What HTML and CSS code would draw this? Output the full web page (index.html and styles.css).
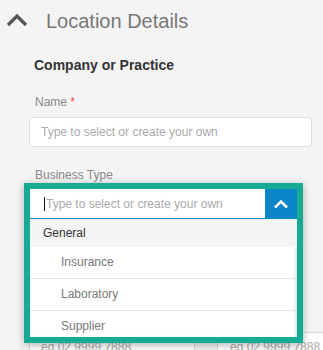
FILE: index.html
```html
<!DOCTYPE html>
<html lang="en">
<head>
    <meta charset="UTF-8">
    <meta name="viewport" content="width=device-width, initial-scale=1.0">
    <title>Location Details</title>
    <link rel="stylesheet" href="styles.css">
</head>
<body>
    <div class="section-head">
        <svg class="collapse-icon" width="22" height="14" viewBox="0 0 22 14">
            <polyline points="2,12 11,3 20,12" fill="none" stroke="#555" stroke-width="3.2"/>
        </svg>
        <h2>Location Details</h2>
    </div>

    <div class="section-body">
        <h3 class="group-title">Company or Practice</h3>

        <div class="field">
            <label>Name <span class="req">*</span></label>
            <input type="text" class="text-input" placeholder="Type to select or create your own">
        </div>

        <div class="field">
            <label class="tight">Business Type</label>
            <div class="combo">
                <!-- открытый список поверх формы -->
                <div class="combo-frame">
                    <div class="combo-input">
                        <span class="caret"></span>
                        <span class="combo-placeholder">Type to select or create your own</span>
                        <button class="combo-toggle">
                            <svg width="16" height="10" viewBox="0 0 16 10">
                                <polyline points="2,8.5 8,2.5 14,8.5" fill="none" stroke="#fff" stroke-width="2.6"/>
                            </svg>
                        </button>
                    </div>
                    <ul class="combo-menu">
                        <li class="group">General</li>
                        <li>Insurance</li>
                        <li>Laboratory</li>
                        <li>Supplier</li>
                    </ul>
                </div>
            </div>
        </div>

        <div class="field-row">
            <input type="text" class="text-input phone" placeholder="eg 02 9999 7888">
            <input type="text" class="text-input fax" placeholder="eg 02 9999 7888">
        </div>
    </div>
</body>
</html>
```

FILE: styles.css
```css
body {
    margin: 0;
    background: #f4f4f4;
    font-family: 'Liberation Sans', Arial, sans-serif;
    font-size: 12px;
    color: #333;
    overflow: hidden;
}
.section-head {
    display: flex;
    align-items: center;
    height: 40px;
    padding-left: 6px;
}
.collapse-icon {
    margin-right: 18px;
}
.section-head h2 {
    margin: 0;
    padding-top: 3px;
    font-size: 20px;
    font-weight: normal;
    color: #777;
}
.section-body {
    padding: 16px 11px 0 29px;
}
.group-title {
    margin: 0 0 0 5px;
    font-size: 14px;
    font-weight: bold;
    color: #333;
    line-height: 18px;
}
.field {
    margin-top: 21px;
}
.field label {
    display: block;
    padding-left: 6px;
    font-size: 12px;
    color: #888;
    line-height: 15px;
    margin-bottom: 7px;
}
.field label.tight {
    margin-bottom: 6px;
}
.req {
    color: #f0524f;
}
.text-input {
    display: block;
    box-sizing: border-box;
    width: 100%;
    height: 30px;
    padding: 0 11px;
    border: 1px solid #ddd;
    border-radius: 3px;
    background: #fff;
    font-family: inherit;
    font-size: 12px;
    color: #333;
    outline: none;
}
.text-input::placeholder {
    color: #aaa;
}
.combo {
    position: relative;
    height: 30px;
    margin-left: 1px;
    width: 267px;
}
.combo-frame {
    position: absolute;
    top: -6px;
    left: -6px;
    width: 267px;
    border: 6px solid #17ab93;
    background: #fff;
    box-shadow: 0 2px 8px rgba(0, 0, 0, 0.3);
    z-index: 5;
}
.combo-input {
    display: flex;
    align-items: center;
    height: 29px;
    border-bottom: 1px solid #0a85c9;
    background: #fff;
}
.caret {
    width: 1px;
    height: 14px;
    background: #111;
    margin-left: 14px;
    margin-right: 1px;
}
.combo-placeholder {
    flex: 1;
    font-size: 12px;
    color: #aaa;
}
.combo-toggle {
    width: 32px;
    height: 29px;
    border: none;
    padding: 0;
    background: #0a85c9;
    display: flex;
    align-items: center;
    justify-content: center;
}
.combo-menu {
    list-style: none;
    margin: 0;
    padding: 0;
    box-shadow: inset -3px 0 5px -3px rgba(0, 0, 0, 0.25);
}
.combo-menu li {
    height: 31px;
    line-height: 31px;
    padding-left: 31px;
    font-size: 12px;
    color: #777;
    border-bottom: 1px solid #e4e4e4;
}
.combo-menu li.group {
    height: 28px;
    line-height: 28px;
    padding-left: 13px;
    background: #f4f4f4;
    color: #333;
    border-bottom: none;
}
.combo-menu li:last-child {
    height: 26px;
    line-height: 30px;
    border-bottom: none;
}
.field-row {
    display: flex;
    gap: 22px;
    margin-top: 113px;
    margin-right: -11px;
    overflow: hidden;
}
.text-input.phone {
    width: 166px;
    flex-shrink: 0;
}
.text-input.fax {
    width: 180px;
    flex-shrink: 0;
    padding-left: 12px;
}
```
